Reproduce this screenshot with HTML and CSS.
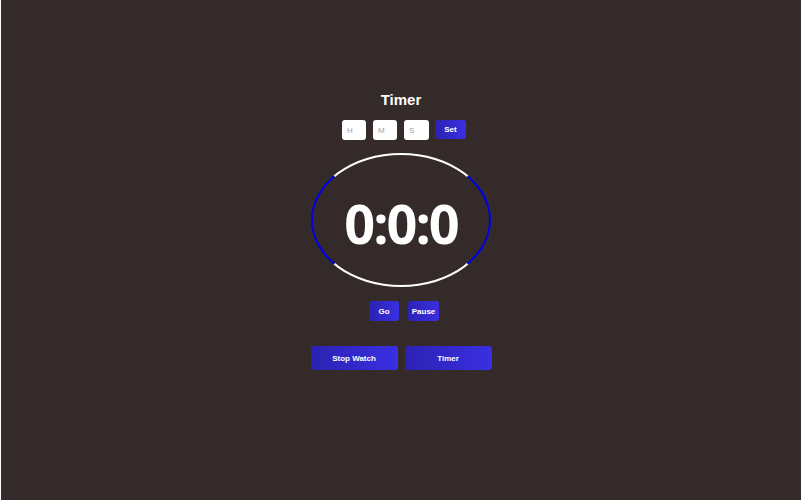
FILE: index.html
```html
<!DOCTYPE html>
<html>
<head>
<meta charset="utf-8">
<link rel="stylesheet" href="styles.css">
</head>
<body>
<div class="page">
  <h1 class="title">Timer</h1>
  <div class="inputs">
    <input class="field" placeholder="H">
    <input class="field" placeholder="M">
    <input class="field" placeholder="S">
    <button class="btn set">Set</button>
  </div>
  <div class="dial"><span class="time">0:0:0</span></div>
  <div class="controls">
    <button class="btn small">Go</button>
    <button class="btn small pause">Pause</button>
  </div>
  <div class="modes">
    <button class="btn mode">Stop Watch</button>
    <button class="btn mode">Timer</button>
  </div>
</div>
</body>
</html>
```
FILE: styles.css
```css
html, body {
  margin: 0;
  padding: 0;
  background: #ffffff;
}
.page {
  height: 500px;
  width: 800px;
  margin-left: 1px;
  background: #342a29;
  display: flex;
  flex-direction: column;
  align-items: center;
  font-family: "Liberation Sans", Arial, sans-serif;
  box-sizing: border-box;
  padding-top: 91px;
}
.title {
  margin: 0;
  color: #ffffff;
  font-size: 15px;
  line-height: 18px;
  font-weight: bold;
}
.inputs {
  margin-top: 11px;
  display: flex;
  gap: 7px;
  padding-left: 6px;
}
.field {
  width: 24px;
  height: 20px;
  box-sizing: border-box;
  border: none;
  border-radius: 3px;
  background: #ffffff;
  padding: 0 0 0 5px;
  font-family: "Liberation Sans", Arial, sans-serif;
  font-size: 8px;
  outline: none;
}
.field:nth-child(3) { width: 25px; }
.field::placeholder { color: #a0a0a0; }
.btn {
  border: none;
  color: #ffffff;
  font-family: "Liberation Sans", Arial, sans-serif;
  font-weight: bold;
  font-size: 8px;
  border-radius: 3px;
  background: linear-gradient(90deg, #2b22b2, #3a2fe2);
  padding: 0;
  cursor: pointer;
}
.set {
  width: 31px;
  height: 19px;
  margin-left: -1px;
}
.dial {
  margin-top: 13px;
  width: 180px;
  height: 134px;
  box-sizing: border-box;
  border: 2px solid;
  border-color: #ffffff #0000e6;
  border-radius: 50%;
  display: flex;
  align-items: center;
  justify-content: center;
}
.time {
  color: #ffffff;
  font-family: "Open Sans", sans-serif;
  font-weight: bold;
  font-size: 54px;
  letter-spacing: -2px;
  line-height: 1;
  margin-top: 5px;
}
.controls {
  margin-top: 14px;
  display: flex;
  gap: 9px;
  padding-left: 6px;
}
.small {
  width: 30px;
  height: 20px;
}
.pause { width: 31px; }
.modes {
  margin-top: 25px;
  display: flex;
  gap: 7px;
}
.mode {
  width: 87px;
  height: 24px;
}
```
